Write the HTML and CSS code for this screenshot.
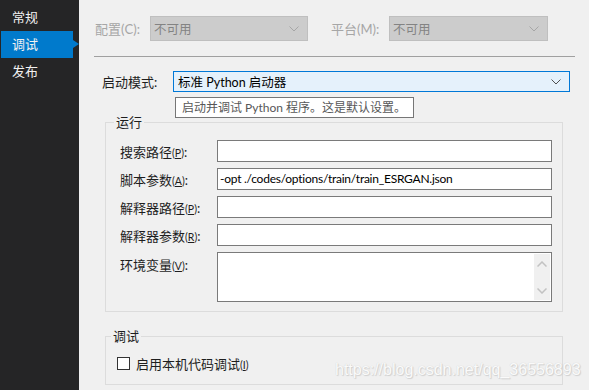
FILE: index.html
```html
<!DOCTYPE html>
<html lang="zh-CN">
<head>
  <meta charset="UTF-8" />
  <meta name="viewport" content="width=device-width, initial-scale=1.0" />
  <title>调试</title>
  <link rel="stylesheet" href="styles.css">
</head>
<body>

  <div class="sidebar">
    <div class="nav-item">常规</div>
    <div class="nav-item active">调试</div>
    <div class="nav-item">发布</div>
  </div>

  <div class="main">
    <div class="config-row">
      <span class="config-label">配置(C):</span>
      <div class="select select-disabled select-config">
        <span>不可用</span>
        <svg class="chevron" width="10" height="6" viewBox="0 0 10 6"><path d="M0.5 0.5 L5 5 L9.5 0.5" fill="none" stroke="#a6a6a6" stroke-width="1"/></svg>
      </div>
      <span class="config-label platform-label">平台(M):</span>
      <div class="select select-disabled select-platform">
        <span>不可用</span>
        <svg class="chevron" width="10" height="6" viewBox="0 0 10 6"><path d="M0.5 0.5 L5 5 L9.5 0.5" fill="none" stroke="#a6a6a6" stroke-width="1"/></svg>
      </div>
    </div>

    <div class="separator"></div>

    <div class="launch-row">
      <span class="launch-label">启动模式:</span>
      <div class="select select-launch">
        <span>标准 Python 启动器</span>
        <svg class="chevron" width="10" height="6" viewBox="0 0 10 6"><path d="M0.5 0.5 L5 5 L9.5 0.5" fill="none" stroke="#505050" stroke-width="1"/></svg>
      </div>
      <div class="tooltip">启动并调试 Python 程序。这是默认设置。</div>
    </div>

    <fieldset class="group group-run">
      <legend>运行</legend>
      <div class="form-row">
        <label>搜索路径<span class="key">(<u>P</u>)</span>:</label>
        <div class="text-input"></div>
      </div>
      <div class="form-row">
        <label>脚本参数<span class="key">(<u>A</u>)</span>:</label>
        <div class="text-input">-opt ./codes/options/train/train_ESRGAN.json</div>
      </div>
      <div class="form-row">
        <label>解释器路径<span class="key">(<u>P</u>)</span>:</label>
        <div class="text-input"></div>
      </div>
      <div class="form-row">
        <label>解释器参数<span class="key">(<u>R</u>)</span>:</label>
        <div class="text-input"></div>
      </div>
      <div class="form-row form-row-top">
        <label>环境变量<span class="key">(<u>V</u>)</span>:</label>
        <div class="text-area">
          <div class="scrollbar">
            <svg width="10" height="6" viewBox="0 0 10 6"><path d="M0.5 5.5 L5 1 L9.5 5.5" fill="none" stroke="#c2c2c2" stroke-width="1.5"/></svg>
            <svg width="10" height="6" viewBox="0 0 10 6"><path d="M0.5 0.5 L5 5 L9.5 0.5" fill="none" stroke="#c2c2c2" stroke-width="1.5"/></svg>
          </div>
        </div>
      </div>
    </fieldset>

    <fieldset class="group group-debug">
      <legend>调试</legend>
      <div class="check-row">
        <span class="checkbox"></span>
        <span>启用本机代码调试<span class="key">(<u>I</u>)</span></span>
      </div>
    </fieldset>

    <div class="watermark">https://blog.csdn.net/qq_36556893</div>
  </div>

</body>
</html>
```

FILE: styles.css
```css
* {
  box-sizing: border-box;
  font-family: Lato, "Noto Sans CJK SC", sans-serif;
}

body {
  margin: 0;
  padding: 0;
  display: flex;
  height: 100vh;
  overflow: hidden;
  font-size: 13px;
  color: #1e1e1e;
}

.sidebar {
  width: 79px;
  background: #252526;
  padding-top: 4px;
  flex-shrink: 0;
}

.nav-item {
  position: relative;
  height: 27px;
  line-height: 27px;
  margin-left: 1px;
  width: 72px;
  padding-left: 11px;
  color: #f1f1f1;
}

.nav-item.active {
  background: #007acc;
}

.nav-item.active::after {
  content: "";
  position: absolute;
  right: -6px;
  top: 9px;
  border-left: 6px solid #007acc;
  border-top: 4.5px solid transparent;
  border-bottom: 4.5px solid transparent;
}

.main {
  position: relative;
  flex: 1;
  background: #f0f0f0;
  padding-top: 16px;
}

.config-row {
  display: flex;
  align-items: center;
  margin-left: 16px;
  height: 25px;
}

.config-label {
  width: 55px;
  color: #a6a6a6;
}

.platform-label {
  width: 58px;
  margin-left: 23px;
}

.select {
  display: flex;
  align-items: center;
  justify-content: space-between;
  padding: 0 8px 0 3px;
  font-size: 12.5px;
}

.select-disabled {
  height: 25px;
  background: #cccccc;
  border: 1px solid #bfbfbf;
  color: #838383;
}

.select-config {
  width: 158px;
}

.select-platform {
  width: 159px;
}

.separator {
  height: 1px;
  background: #a0a0a0;
  width: 481px;
  margin: 15px 0 0 15px;
}

.launch-row {
  position: relative;
  display: flex;
  align-items: center;
  margin: 14px 0 0 23px;
}

.launch-label {
  width: 71px;
}

.select-launch {
  width: 397px;
  height: 21px;
  background: #e5f1fb;
  border: 1px solid #0078d7;
  padding-left: 4px;
  color: #000000;
}

.tooltip {
  position: absolute;
  left: 73px;
  top: 26px;
  width: 239px;
  height: 21px;
  line-height: 19px;
  padding-left: 6px;
  background: #ffffff;
  border: 1px solid #767676;
  color: #575757;
  font-size: 12px;
  white-space: nowrap;
}

.group {
  margin: 0 26px;
  border: 1px solid #dcdcdc;
  padding: 0 10px 0 14px;
}

.group legend {
  padding: 0 2px;
  margin-left: -6px;
  line-height: 17px;
}

.group-run {
  margin-top: 22px;
  padding-top: 9px;
  padding-bottom: 9px;
}

.form-row {
  display: flex;
  align-items: center;
  margin-bottom: 6px;
}

.form-row:last-child {
  margin-bottom: 0;
}

.form-row-top {
  align-items: flex-start;
}

.form-row-top label {
  padding-top: 3px;
}

.form-row label {
  width: 97px;
  flex-shrink: 0;
}

.key {
  font-size: 10.5px;
}

.text-input {
  flex: 1;
  height: 22px;
  line-height: 20px;
  background: #ffffff;
  border: 1px solid #7a7a7a;
  padding-left: 2px;
  color: #000000;
  font-size: 12px;
  letter-spacing: -0.25px;
}

.text-area {
  flex: 1;
  height: 50px;
  background: #ffffff;
  border: 1px solid #7a7a7a;
  display: flex;
  justify-content: flex-end;
  padding: 1px;
}

.scrollbar {
  width: 16px;
  background: #f0f0f0;
  display: flex;
  flex-direction: column;
  justify-content: space-between;
  align-items: center;
  padding: 7px 0 6px;
}

.group-debug {
  margin-top: 16px;
  padding-top: 9px;
  padding-bottom: 11px;
  padding-left: 11px;
}

.check-row {
  display: flex;
  align-items: center;
  gap: 6px;
}

.checkbox {
  width: 13px;
  height: 13px;
  background: #ffffff;
  border: 1px solid #333333;
}

.watermark {
  position: absolute;
  left: 256px;
  top: 361px;
  font-family: "Liberation Sans", Arial, sans-serif;
  font-size: 16px;
  color: #fafafa;
  text-shadow: 0 0 1px #c8c8c8, 1px 1px 1px #d0d0d0;
  white-space: nowrap;
}
```
